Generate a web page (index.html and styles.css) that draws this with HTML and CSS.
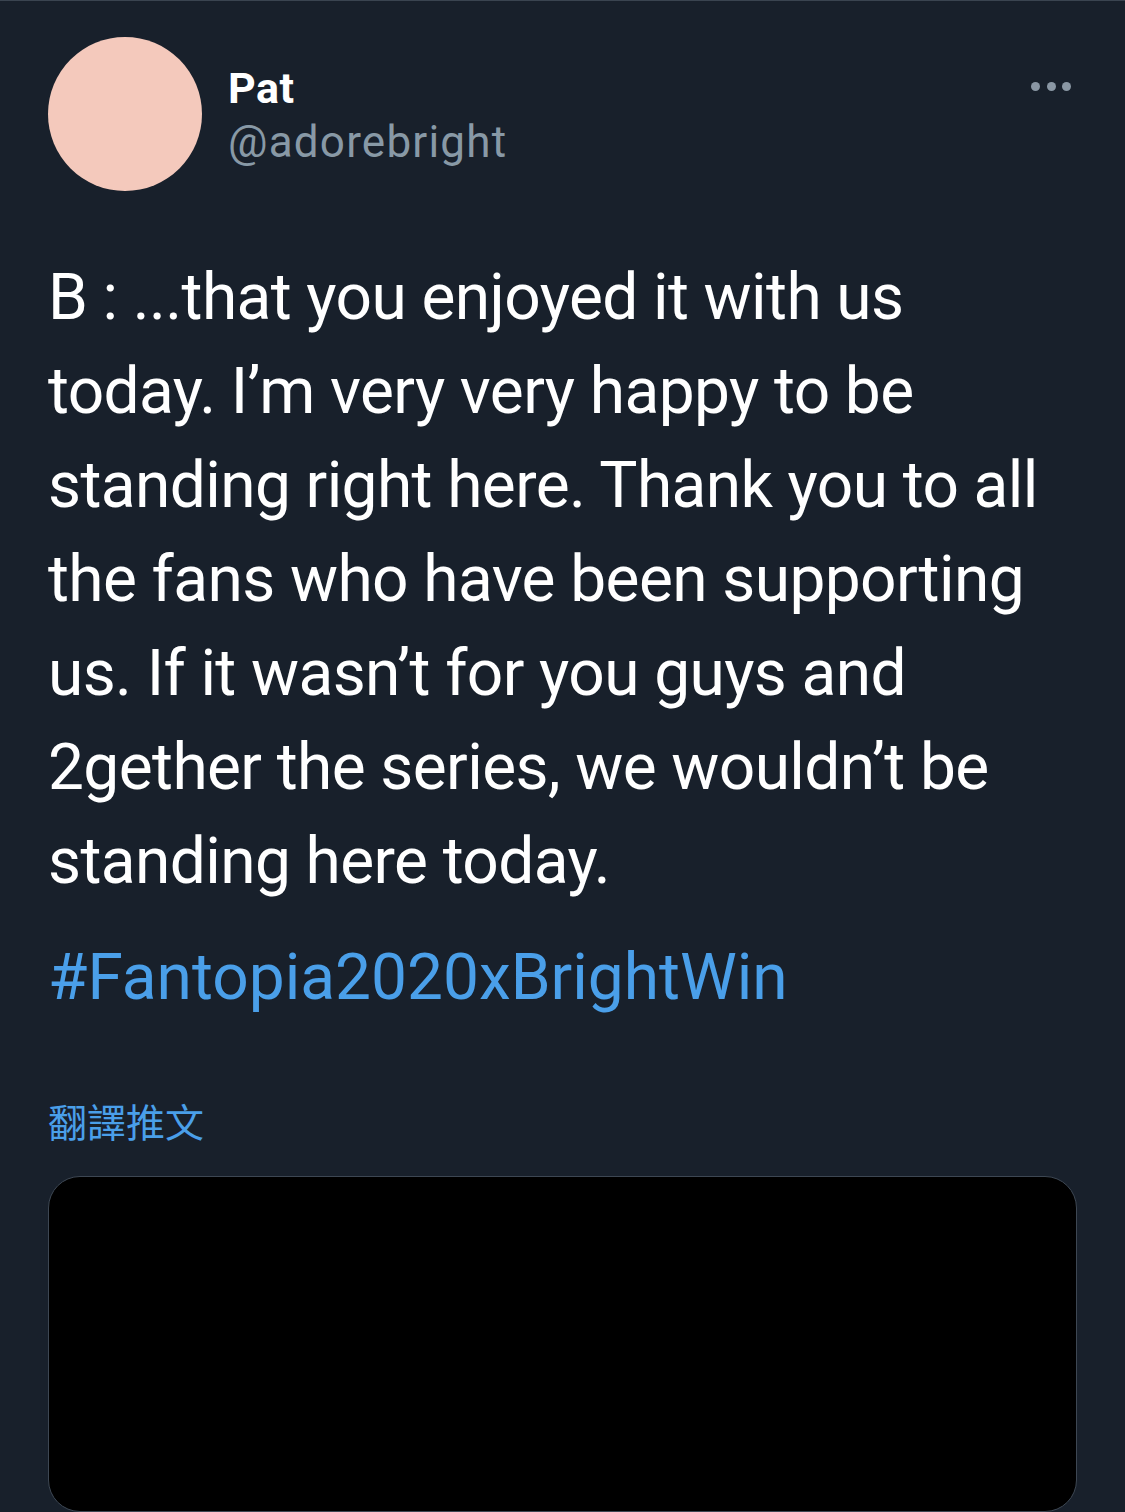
FILE: index.html
```html
<!DOCTYPE html>
<html lang="zh-Hant">
<head>
<meta charset="utf-8">
<title>Pat on Twitter</title>
<link rel="stylesheet" href="styles.css">
</head>
<body>
<main class="tweet">
  <header class="tweet-header">
    <div class="avatar"></div>
    <div class="names">
      <div class="name">Pat</div>
      <div class="handle">@adorebright</div>
    </div>
    <div class="more" aria-label="More">
      <span class="dot"></span><span class="dot"></span><span class="dot"></span>
    </div>
  </header>
  <p class="tweet-text">B : ...that you enjoyed it with us<br>today. I’m very very happy to be<br>standing right here. Thank you to all<br>the fans who have been supporting<br>us. If it wasn’t for you guys and<br>2gether the series, we wouldn’t be<br>standing here today.</p>
  <p class="hashtag">#Fantopia2020xBrightWin</p>
  <div class="translate">翻譯推文</div>
  <div class="media"></div>
</main>
</body>
</html>
```
FILE: styles.css
```css
html, body {
  margin: 0;
  padding: 0;
  height: 1512px;
  overflow: hidden;
  background: #18202b;
}
body {
  font-family: Roboto, "Noto Sans", "Noto Sans CJK TC", sans-serif;
  color: #ffffff;
}
.tweet {
  border-top: 1px solid #3a4450;
  padding: 0 48px 0 48px;
  display: flex;
  flex-direction: column;
}
.tweet-header {
  display: flex;
  align-items: flex-start;
  padding-top: 36px;
}
.avatar {
  width: 154px;
  height: 154px;
  border-radius: 50%;
  background: #f4c9bc;
  flex: none;
}
.names {
  margin-left: 26px;
  padding-top: 26px;
  display: flex;
  flex-direction: column;
  flex: 1;
}
.name {
  font-size: 43px;
  font-weight: 700;
  line-height: 50px;
  letter-spacing: 0.5px;
  color: #ffffff;
}
.handle {
  font-size: 44px;
  font-weight: 400;
  line-height: 50px;
  letter-spacing: 1.2px;
  margin-top: 4px;
  color: #8899a6;
}
.more {
  display: flex;
  gap: 6.5px;
  margin-top: 45px;
  margin-right: 6px;
}
.dot {
  width: 9px;
  height: 9px;
  border-radius: 50%;
  background: #8a97a4;
}
.tweet-text {
  margin: 60px 0 0 0;
  font-size: 64px;
  line-height: 94px;
  letter-spacing: -0.6px;
  white-space: nowrap;
  color: #ffffff;
}
.hashtag {
  margin: 22px 0 0 0;
  font-size: 64px;
  line-height: 94px;
  color: #4a9fe9;
}
.translate {
  margin-top: 74px;
  font-family: "Noto Sans CJK TC", "Noto Sans CJK SC", sans-serif;
  font-size: 39px;
  line-height: 42px;
  color: #4a9fe9;
}
.media {
  margin-top: 35px;
  height: 336px;
  box-sizing: border-box;
  border: 1px solid #3d4753;
  border-radius: 32px;
  background: #000000;
}
```
